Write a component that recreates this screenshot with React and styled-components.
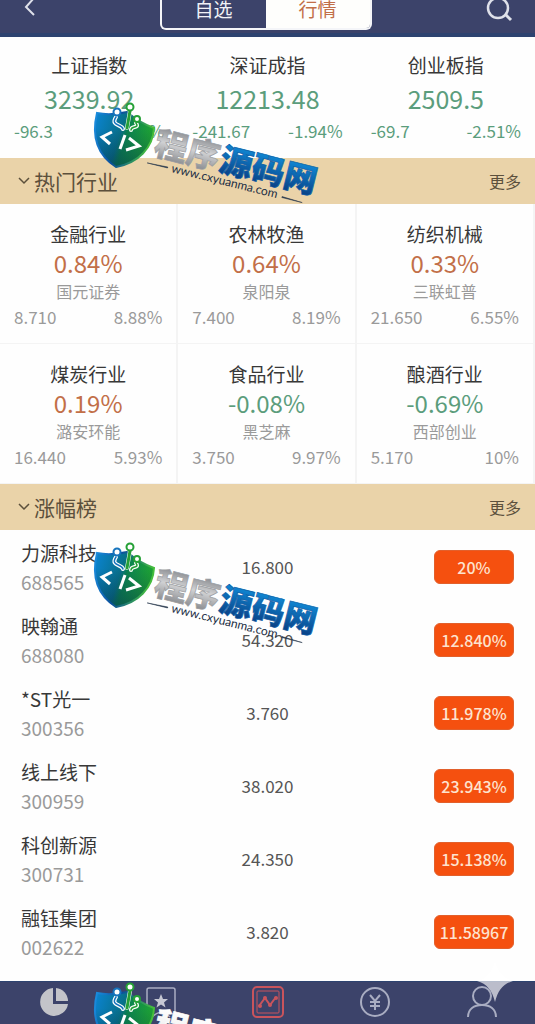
import { useState } from "react";
import styled, { createGlobalStyle, ThemeProvider } from "styled-components";

const theme = {
    bar: "#3c436a",
    barEdge: "#2d4370",
    band: "#ead3a9",
    up: "#c26f48",
    down: "#5b9d7c",
    text: "#383838",
    muted: "#9a9a9a",
    line: "#f4f4f4",
    badge: "#f5500f",
};

const GlobalStyle = createGlobalStyle`
    * {
        box-sizing: border-box;
    }

    body {
        margin: 0;
        background: #fefefe;
        font-family: "Noto Sans CJK SC", "Noto Sans", sans-serif;
    }

    button {
        font-family: inherit;
        border: 0;
        padding: 0;
        background: none;
        cursor: pointer;
    }
`;

const Page = styled.div`
    position: relative;
    display: flex;
    flex-direction: column;
    min-height: 100vh;
    overflow: hidden;
    color: ${props => props.theme.text};
`;

const Header = styled.header`
    display: grid;
    grid-template-columns: 1fr auto 1fr;
    align-items: start;
    height: 37px;
    padding: 0 22px 0 18px;
    background: ${props => props.theme.bar};
    border-bottom: 4px solid ${props => props.theme.barEdge};
`;

const HeaderButton = styled.button`
    display: flex;
    justify-self: ${props => props.$end ? "end" : "start"};
    color: #dfe1ea;
`;

const Segments = styled.div`
    display: flex;
    height: 30px;
    border: 2px solid #f4f5f8;
    border-top: 0;
    border-radius: 0 0 6px 6px;
    overflow: hidden;
`;

const Segment = styled.button`
    width: 104px;
    padding-bottom: 10px;
    font-size: 19px;
    line-height: 18px;
    color: ${props => props.$active ? props.theme.up : "#f1f2f6"};
    background: ${props => props.$active ? "#fefefc" : "transparent"};
`;

const Indices = styled.section`
    display: grid;
    grid-template-columns: repeat(3, 1fr);
    padding: 14px 0 13px;
`;

const IndexCard = styled.div`
    padding: 0 14px;
    text-align: center;
`;

const Name = styled.div`
    font-size: 19px;
    line-height: 28px;
`;

const IndexValue = styled.div`
    font-size: 25px;
    line-height: 38px;
    color: ${props => props.theme.down};
`;

const Pair = styled.div`
    display: flex;
    justify-content: space-between;
    font-size: 17px;
    line-height: 26px;
    color: ${props => props.$down ? props.theme.down : props.theme.muted};
`;

const IndexPair = styled(Pair)`
    line-height: 28px;
`;

const Band = styled.div`
    display: flex;
    align-items: center;
    justify-content: space-between;
    height: 46px;
    padding: 0 14px 0 18px;
    background: ${props => props.theme.band};
`;

const BandTitle = styled.button`
    display: flex;
    align-items: center;
    gap: 4px;
    font-size: 21px;
    line-height: 30px;
    color: #5c503c;
`;

const MoreLink = styled.a`
    font-size: 16px;
    line-height: 24px;
    color: #5c503c;
    text-decoration: none;
`;

const Industries = styled.section`
    display: grid;
    grid-template-columns: repeat(3, 1fr);
`;

const Industry = styled.div`
    padding: 16px 14px 13px;
    text-align: center;
    border-right: 2px solid ${props => props.theme.line};
    border-bottom: 1px solid ${props => props.theme.line};
`;

const Rate = styled.div`
    font-size: 24px;
    line-height: 30px;
    color: ${props => props.$down ? props.theme.down : props.theme.up};
`;

const Company = styled.div`
    font-size: 16px;
    line-height: 26px;
    color: ${props => props.theme.muted};
`;

const Quotes = styled.table`
    width: 100%;
    table-layout: fixed;
    border-collapse: collapse;
`;

const QuoteCell = styled.td`
    height: 73px;
    padding: 0 21px;
    font-size: 17px;
    text-align: ${props => props.$align || "left"};
    color: #555;
`;

const QuoteName = styled.div`
    font-size: 19px;
    line-height: 29px;
    color: ${props => props.theme.text};
`;

const QuoteCode = styled(QuoteName)`
    color: ${props => props.theme.muted};
`;

const Badge = styled.span`
    display: inline-block;
    width: 80px;
    border-radius: 6px;
    border: 1px solid #e2602c;
    background: ${props => props.theme.badge};
    color: #fde3cf;
    font-size: 16px;
    font-weight: 500;
    line-height: 32px;
    text-align: center;
    vertical-align: middle;
`;

const TabBar = styled.nav`
    display: grid;
    grid-template-columns: repeat(5, 1fr);
    height: 43px;
    margin-top: auto;
    padding-top: 4px;
    background: ${props => props.theme.bar};
    border-top: 1px solid ${props => props.theme.barEdge};
`;

const Tab = styled.a`
    display: flex;
    justify-content: center;
    align-items: flex-start;
    color: ${props => props.$active ? "#c9545c" : "#a9adc2"};
`;

const Watermark = styled.svg`
    position: absolute;
    left: 80px;
    top: ${props => props.$top}px;
    pointer-events: none;
`;

const Sparkle = styled.svg`
    position: absolute;
    right: 22px;
    bottom: 22px;
    pointer-events: none;
`;

const indices = [
    { name: "上证指数", value: "3239.92", change: "-96.3", rate: "-2.89%" },
    { name: "深证成指", value: "12213.48", change: "-241.67", rate: "-1.94%" },
    { name: "创业板指", value: "2509.5", change: "-69.7", rate: "-2.51%" },
];

const industries = [
    { name: "金融行业", rate: "0.84%", company: "国元证券", price: "8.710", gain: "8.88%" },
    { name: "农林牧渔", rate: "0.64%", company: "泉阳泉", price: "7.400", gain: "8.19%" },
    { name: "纺织机械", rate: "0.33%", company: "三联虹普", price: "21.650", gain: "6.55%" },
    { name: "煤炭行业", rate: "0.19%", company: "潞安环能", price: "16.440", gain: "5.93%" },
    { name: "食品行业", rate: "-0.08%", company: "黑芝麻", price: "3.750", gain: "9.97%" },
    { name: "酿酒行业", rate: "-0.69%", company: "西部创业", price: "5.170", gain: "10%" },
];

const quotes = [
    { name: "力源科技", code: "688565", price: "16.800", gain: "20%" },
    { name: "映翰通", code: "688080", price: "54.320", gain: "12.840%" },
    { name: "*ST光一", code: "300356", price: "3.760", gain: "11.978%" },
    { name: "线上线下", code: "300959", price: "38.020", gain: "23.943%" },
    { name: "科创新源", code: "300731", price: "24.350", gain: "15.138%" },
    { name: "融钰集团", code: "002622", price: "3.820", gain: "11.58967" },
];

function PieIcon() {
    return (
        <svg width="32" height="32" viewBox="0 0 32 32">
            <path d="M15 2 A14 14 0 1 0 30 18 H15 Z" fill="#c3c4c9" />
            <path d="M18 2 A13 13 0 0 1 30 15 H18 Z" fill="#c3c4c9" />
        </svg>
    );
}

function StarIcon() {
    return (
        <svg width="32" height="32" viewBox="0 0 32 32" fill="none" stroke="currentColor" strokeWidth="1.5">
            <path d="M2 30 V4 Q2 2 4 2 H28 Q30 2 30 4 V30" />
            <path d="M7 31 Q16 22 25 31" />
            <path d="M16 8 L18 13 L23 13 L19 16.500 L20.500 21.500 L16 18.500 L11.500 21.500 L13 16.500 L9 13 L14 13 Z" fill="#c6c8d4" stroke="none" />
        </svg>
    );
}

function TrendIcon() {
    return (
        <svg width="32" height="32" viewBox="0 0 32 32" fill="none" stroke="currentColor" strokeWidth="2">
            <rect x="1" y="1" width="30" height="30" rx="4" />
            <rect x="5" y="5" width="22" height="22" rx="1" strokeWidth="1" />
            <path d="M7 20 L13 12 L18 19 L24 11" />
            <g fill="currentColor" stroke="none">
                <circle cx="8" cy="20" r="2" />
                <circle cx="13" cy="12" r="2" />
                <circle cx="18" cy="19" r="2" />
                <circle cx="24" cy="12" r="2" />
            </g>
        </svg>
    );
}

function YuanIcon() {
    return (
        <svg width="32" height="32" viewBox="0 0 32 32" fill="none" stroke="currentColor" strokeWidth="2">
            <circle cx="16" cy="16" r="14" />
            <path d="M11 9 L16 15 L21 9 M16 15 V24 M11 16 H21 M11 20 H21" />
        </svg>
    );
}

function PersonIcon() {
    return (
        <svg width="32" height="32" viewBox="0 0 32 32" fill="none" stroke="currentColor" strokeWidth="2">
            <circle cx="16" cy="10" r="9" />
            <path d="M2 31 C2 23 8 19 16 19 C24 19 30 23 30 31" />
        </svg>
    );
}

const tabs = [
    { label: "首页", Icon: PieIcon },
    { label: "自选", Icon: StarIcon },
    { label: "行情", Icon: TrendIcon, active: true },
    { label: "交易", Icon: YuanIcon },
    { label: "我的", Icon: PersonIcon },
];

const shieldPath = "M17 23 C27 25 38 24 47 22 C54 28 63 34 74 38 C73 58 58 73 36 77 C19 66 11 48 17 23 Z";

function SiteMark({ id, top, light }) {
    return (
        <Watermark $top={top} width="250" height="130" viewBox="0 0 250 130" aria-hidden="true">
            <defs>
                <linearGradient id={`${id}-shield`} x1="0" y1="0" x2="1" y2="0.3">
                    <stop offset="0" stopColor="#0b84d4" />
                    <stop offset="0.5" stopColor="#08708a" />
                    <stop offset="0.6" stopColor="#0c8450" />
                    <stop offset="1" stopColor="#1fa532" />
                </linearGradient>
                <linearGradient id={`${id}-edge`} x1="0" y1="0" x2="1" y2="0.2">
                    <stop offset="0" stopColor="#1b8fe0" />
                    <stop offset="0.45" stopColor="#0b4f9c" />
                    <stop offset="1" stopColor="#45bd3c" />
                </linearGradient>
                <linearGradient id={`${id}-shade`} x1="0" y1="0" x2="0" y2="1">
                    <stop offset="0.3" stopColor="#04304f" stopOpacity="0" />
                    <stop offset="1" stopColor="#04304f" stopOpacity="0.5" />
                </linearGradient>
                <linearGradient id={`${id}-grey`} x1="0" y1="0" x2="0" y2="1">
                    <stop offset="0.2" stopColor={light ? "#ffffff" : "#8d8f93"} />
                    <stop offset="0.5" stopColor={light ? "#f4f4f4" : "#d0d1d3"} />
                    <stop offset="0.9" stopColor={light ? "#dddddd" : "#85878b"} />
                </linearGradient>
                <linearGradient id={`${id}-blue`} x1="0" y1="0" x2="0" y2="1">
                    <stop offset="0.25" stopColor="#0f83cf" />
                    <stop offset="0.9" stopColor="#0a3c80" />
                </linearGradient>
            </defs>

            <path d={shieldPath} fill={`url(#${id}-shield)`} />
            <path d={shieldPath} fill={`url(#${id}-shade)`} />
            <path d={shieldPath} fill="none" stroke={`url(#${id}-edge)`} strokeWidth="2" />

            <g fill="none" strokeLinecap="round">
                <g stroke="#ffffff" strokeWidth="4">
                    <path d="M36 27 C30 36 42 34 43 39" />
                    <path d="M50 21 L47 38" />
                    <path d="M56 33 C60 39 51 35 51 40" />
                </g>
                <path d="M36 27 C30 36 42 34 43 39" stroke="#1674bd" strokeWidth="1.5" />
                <path d="M50 21 L47 38" stroke="#25a036" strokeWidth="3" />
                <path d="M56 33 C60 39 51 35 51 40" stroke="#25a036" strokeWidth="1.5" />
                <circle cx="37" cy="22" r="3.5" fill="#ffffff" stroke="#1674bd" strokeWidth="2" />
                <circle cx="50" cy="17" r="3.5" fill="#ffffff" stroke="#25a036" strokeWidth="2" />
                <circle cx="57" cy="29" r="3" fill="#ffffff" stroke="#25a036" strokeWidth="2" />
            </g>
            <g fill="none" stroke="#ffffff" strokeWidth="3">
                <path d="M32 42 L22 47 L30 54" />
                <path d="M45 45 L40 59" />
                <path d="M49 48 L59 56 L46 60" />
            </g>

            <g transform="translate(73 62) rotate(14)">
                <g fontSize="33" fontWeight="900" strokeWidth="0.7">
                    <text x="0" y="2" fill={`url(#${id}-grey)`} stroke={light ? "#ffffff" : "#9c9ea2"}>程序</text>
                    <text x="67" y="2" fill={`url(#${id}-blue)`} stroke="#0d5fa8">源码网</text>
                </g>
                <text x="22" y="15" fontFamily="Lato, sans-serif" fontSize="12" fill="#1d2f45">www.cxyuanma.com</text>
                <path d="M-3 12 L18 11 V12 Z M136 12 L157 13 L136 13 Z" fill="#26374c" stroke="#26374c" strokeWidth="0.5" />
            </g>
        </Watermark>
    );
}

function SectionBand({ title, open, onToggle }) {
    return (
        <Band>
            <BandTitle onClick={onToggle} aria-expanded={open}>
                <svg width="12" height="12" viewBox="0 0 12 12" fill="none" stroke="currentColor" strokeWidth="1.5">
                    <path d="M1 3 L6 8 L11 3" />
                </svg>
                {title}
            </BandTitle>
            <MoreLink href="#more">更多</MoreLink>
        </Band>
    );
}

function App() {
    const [view, setView] = useState("market");
    const [showIndustries, setShowIndustries] = useState(true);
    const [showGainers, setShowGainers] = useState(true);

    return (
        <ThemeProvider theme={theme}>
            <GlobalStyle />
            <Page>
                <Header>
                    <HeaderButton aria-label="返回">
                        <svg width="18" height="18" viewBox="0 0 18 18" fill="none" stroke="currentColor" strokeWidth="2">
                            <path d="M16 -2 L8 7 L16 15" />
                        </svg>
                    </HeaderButton>
                    <Segments>
                        <Segment $active={view === "own"} onClick={() => setView("own")}>自选</Segment>
                        <Segment $active={view === "market"} onClick={() => setView("market")}>行情</Segment>
                    </Segments>
                    <HeaderButton $end aria-label="搜索">
                        <svg width="28" height="22" viewBox="0 0 28 22" fill="none" stroke="currentColor" strokeWidth="2.5">
                            <circle cx="13" cy="8" r="10" />
                            <path d="M20 14 L26 20" strokeWidth="3" />
                        </svg>
                    </HeaderButton>
                </Header>

                <Indices>
                    {indices.map(item => (
                        <IndexCard key={item.name}>
                            <Name>{item.name}</Name>
                            <IndexValue>{item.value}</IndexValue>
                            <IndexPair $down>
                                <span>{item.change}</span>
                                <span>{item.rate}</span>
                            </IndexPair>
                        </IndexCard>
                    ))}
                </Indices>

                <SectionBand title="热门行业" open={showIndustries} onToggle={() => setShowIndustries(!showIndustries)} />
                {showIndustries ?
                    <Industries>
                        {industries.map(item => (
                            <Industry key={item.name}>
                                <Name>{item.name}</Name>
                                <Rate $down={item.rate.startsWith("-")}>{item.rate}</Rate>
                                <Company>{item.company}</Company>
                                <Pair>
                                    <span>{item.price}</span>
                                    <span>{item.gain}</span>
                                </Pair>
                            </Industry>
                        ))}
                    </Industries>
                    : null}

                <SectionBand title="涨幅榜" open={showGainers} onToggle={() => setShowGainers(!showGainers)} />
                {showGainers ?
                    <Quotes>
                        <tbody>
                            {quotes.map(item => (
                                <tr key={item.code}>
                                    <QuoteCell>
                                        <QuoteName>{item.name}</QuoteName>
                                        <QuoteCode>{item.code}</QuoteCode>
                                    </QuoteCell>
                                    <QuoteCell $align="center">{item.price}</QuoteCell>
                                    <QuoteCell $align="right"><Badge>{item.gain}</Badge></QuoteCell>
                                </tr>
                            ))}
                        </tbody>
                    </Quotes>
                    : null}

                <TabBar>
                    {tabs.map(({ label, Icon, active }) => (
                        <Tab key={label} href="#tab" aria-label={label} $active={active}>
                            <Icon />
                        </Tab>
                    ))}
                </TabBar>

                <SiteMark id="mark-a" top={90} />
                <SiteMark id="mark-b" top={530} />
                <SiteMark id="mark-c" top={970} light />
                <Sparkle width="36" height="42" viewBox="0 0 36 42" aria-hidden="true">
                    <path d="M18 0 C21 12 26 18 36 21 C26 24 21 30 18 42 C15 30 10 24 0 21 C10 18 15 12 18 0 Z" fill="#ffffff" fillOpacity="0.65" />
                </Sparkle>
            </Page>
        </ThemeProvider>
    );
}

export default App;
